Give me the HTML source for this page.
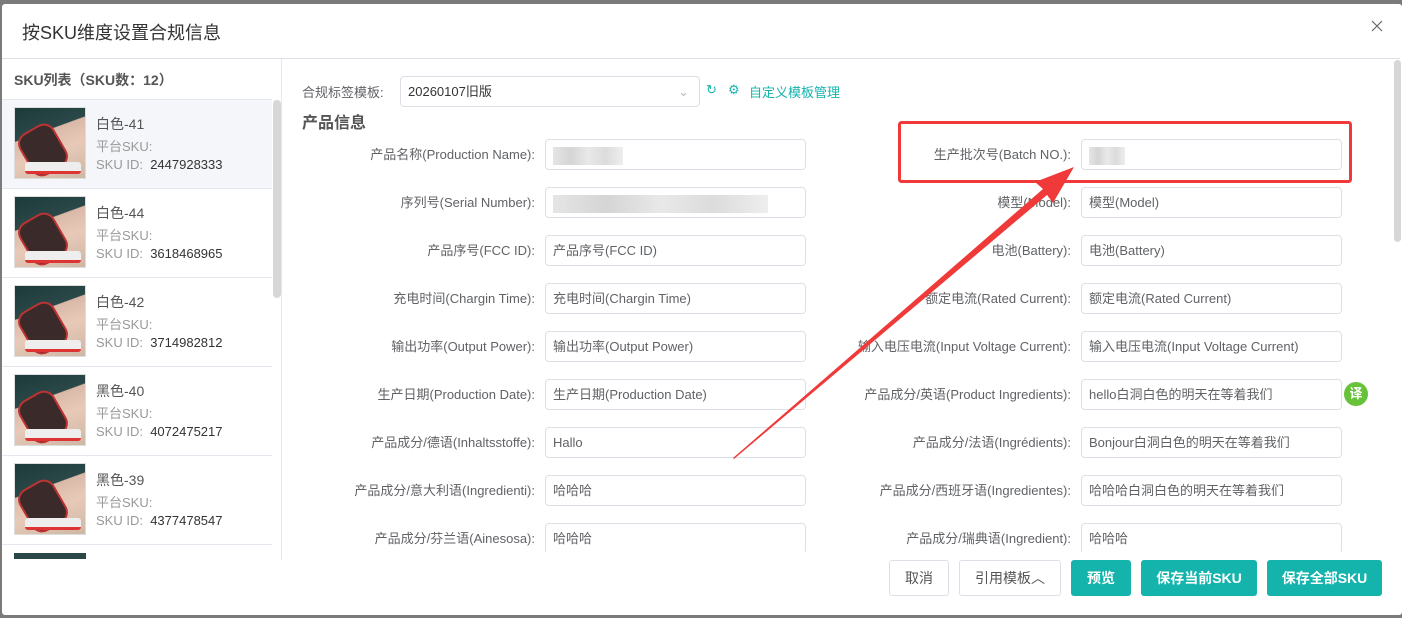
<!DOCTYPE html>
<html><head><meta charset="utf-8">
<style>
*{box-sizing:border-box;margin:0;padding:0}
body{width:1402px;height:618px;background:#7b7b7b;position:relative;overflow:hidden;font-family:"Liberation Sans","Noto Sans CJK SC",sans-serif;font-size:13px;color:#606266}
.a{position:absolute}
.modal{left:2px;top:4px;width:1400px;height:611px;background:#fff;border-radius:3px}
.inp{position:absolute;height:31px;border:1px solid #dcdfe6;border-radius:4px;background:#fff;padding-left:7px;line-height:29px;color:#606266;font-size:13px;white-space:nowrap;overflow:hidden}
.lbl{position:absolute;text-align:right;line-height:31px;white-space:nowrap;font-size:13px;color:#606266}
.item{position:absolute;left:2px;width:270px;height:89px;border-bottom:1px solid #e4e7ed}
.item .img{position:absolute;left:12px;top:7px;width:72px;height:72px;border:1px solid #ddd;background:linear-gradient(160deg,#1d3a3a 0%,#2b4848 35%,#d9b8a8 36%,#e8c9b8 60%,#cdb8a5 100%);overflow:hidden}
.item .img:before{content:"";position:absolute;left:8px;top:18px;width:36px;height:44px;background:#3a2a2a;border-radius:12px;transform:rotate(-30deg);border:2px solid #b33}
.item .img:after{content:"";position:absolute;left:10px;top:54px;width:56px;height:9px;background:#eee;border-bottom:3px solid #d33;border-radius:3px}
.item .t{position:absolute;left:94px;top:14px;font-size:14px;color:#555}
.item .s{position:absolute;left:94px;top:38px;color:#999;font-size:13px;line-height:18px}
.item .s b{font-weight:normal;color:#333}
.btn{position:absolute;top:560px;height:36px;border-radius:3px;font-size:14px;text-align:center;line-height:34px}
.g{background:#14b4ad;color:#fff;font-weight:bold;border:1px solid #14b4ad}
.w{background:#fff;color:#555;border:1px solid #dcdfe6}
.blur{display:inline-block;height:18px;vertical-align:middle;background:linear-gradient(90deg,#e2e2e2,#d0d0d0,#e6e6e6,#d8d8d8,#ececec);opacity:.9}
</style></head><body>
<div class="a modal"></div>
<div class="a" style="left:22px;top:19px;font-size:18px;color:#333">按SKU维度设置合规信息</div>
<svg class="a" style="left:1371px;top:20px" width="12" height="12"><path d="M1 1L11 11M11 1L1 11" stroke="#666" stroke-width="1.2"/></svg>
<div class="a" style="left:2px;top:58px;width:1398px;height:1px;background:#dcdfe6"></div>
<div class="a" style="left:281px;top:59px;width:1px;height:501px;background:#e4e7ed"></div>
<div class="a" style="left:14px;top:70px;font-size:14px;font-weight:bold;color:#555">SKU列表（SKU数：12）</div>
<div class="a" style="left:2px;top:99px;width:270px;height:1px;background:#e4e7ed"></div>
<div class="item" style="top:100px;background:#f4f6fa"><div class="img"></div><div class="t">白色-41</div><div class="s">平台SKU:<br>SKU ID:&nbsp; <b>2447928333</b></div></div>
<div class="item" style="top:189px"><div class="img"></div><div class="t">白色-44</div><div class="s">平台SKU:<br>SKU ID:&nbsp; <b>3618468965</b></div></div>
<div class="item" style="top:278px"><div class="img"></div><div class="t">白色-42</div><div class="s">平台SKU:<br>SKU ID:&nbsp; <b>3714982812</b></div></div>
<div class="item" style="top:367px"><div class="img"></div><div class="t">黑色-40</div><div class="s">平台SKU:<br>SKU ID:&nbsp; <b>4072475217</b></div></div>
<div class="item" style="top:456px"><div class="img"></div><div class="t">黑色-39</div><div class="s">平台SKU:<br>SKU ID:&nbsp; <b>4377478547</b></div></div>
<div class="a" style="left:14px;top:553px;width:72px;height:6px;background:#2b4848;overflow:hidden"></div>
<div class="a" style="left:273px;top:100px;width:8px;height:198px;background:#d7d7d7;border-radius:4px"></div>
<div class="a" style="left:1394px;top:60px;width:7px;height:182px;background:#d7d7d7;border-radius:4px"></div>

<div class="a" style="left:302px;top:82px;color:#606266">合规标签模板:</div>
<div class="inp" style="left:400px;top:76px;width:300px;color:#333">20260107旧版<span style="position:absolute;right:10px;top:0;color:#bbb">⌄</span></div>
<div class="a" style="left:706px;top:82px;color:#14b4ad">↻</div>
<div class="a" style="left:728px;top:82px;color:#14b4ad">⚙</div>
<div class="a" style="left:749px;top:82px;color:#14b4ad">自定义模板管理</div>
<div class="a" style="left:302px;top:109px;font-size:16px;font-weight:bold;color:#555">产品信息</div>

<div class="lbl" style="right:867px;top:139px">产品名称(Production Name):</div>
<div class="inp" style="left:545px;top:139px;width:261px"><span class="blur" style="width:70px"></span></div>
<div class="lbl" style="right:867px;top:187px">序列号(Serial Number):</div>
<div class="inp" style="left:545px;top:187px;width:261px"><span class="blur" style="width:215px"></span></div>
<div class="lbl" style="right:867px;top:235px">产品序号(FCC ID):</div>
<div class="inp" style="left:545px;top:235px;width:261px">产品序号(FCC ID)</div>
<div class="lbl" style="right:867px;top:283px">充电时间(Chargin Time):</div>
<div class="inp" style="left:545px;top:283px;width:261px">充电时间(Chargin Time)</div>
<div class="lbl" style="right:867px;top:331px">输出功率(Output Power):</div>
<div class="inp" style="left:545px;top:331px;width:261px">输出功率(Output Power)</div>
<div class="lbl" style="right:867px;top:379px">生产日期(Production Date):</div>
<div class="inp" style="left:545px;top:379px;width:261px">生产日期(Production Date)</div>
<div class="lbl" style="right:867px;top:427px">产品成分/德语(Inhaltsstoffe):</div>
<div class="inp" style="left:545px;top:427px;width:261px">Hallo</div>
<div class="lbl" style="right:867px;top:475px">产品成分/意大利语(Ingredienti):</div>
<div class="inp" style="left:545px;top:475px;width:261px">哈哈哈</div>
<div class="lbl" style="right:867px;top:523px">产品成分/芬兰语(Ainesosa):</div>
<div class="inp" style="left:545px;top:523px;width:261px">哈哈哈</div>

<div class="lbl" style="right:331px;top:139px">生产批次号(Batch NO.):</div>
<div class="inp" style="left:1081px;top:139px;width:261px"><span class="blur" style="width:36px"></span></div>
<div class="lbl" style="right:331px;top:187px">模型(Model):</div>
<div class="inp" style="left:1081px;top:187px;width:261px">模型(Model)</div>
<div class="lbl" style="right:331px;top:235px">电池(Battery):</div>
<div class="inp" style="left:1081px;top:235px;width:261px">电池(Battery)</div>
<div class="lbl" style="right:331px;top:283px">额定电流(Rated Current):</div>
<div class="inp" style="left:1081px;top:283px;width:261px">额定电流(Rated Current)</div>
<div class="lbl" style="right:331px;top:331px">输入电压电流(Input Voltage Current):</div>
<div class="inp" style="left:1081px;top:331px;width:261px">输入电压电流(Input Voltage Current)</div>
<div class="lbl" style="right:331px;top:379px">产品成分/英语(Product Ingredients):</div>
<div class="inp" style="left:1081px;top:379px;width:261px">hello白洞白色的明天在等着我们</div>
<div class="a" style="left:1344px;top:382px;width:24px;height:24px;border-radius:50%;background:#67c23a;color:#fff;font-size:13px;font-weight:bold;text-align:center;line-height:24px">译</div>
<div class="lbl" style="right:331px;top:427px">产品成分/法语(Ingrédients):</div>
<div class="inp" style="left:1081px;top:427px;width:261px">Bonjour白洞白色的明天在等着我们</div>
<div class="lbl" style="right:331px;top:475px">产品成分/西班牙语(Ingredientes):</div>
<div class="inp" style="left:1081px;top:475px;width:261px">哈哈哈白洞白色的明天在等着我们</div>
<div class="lbl" style="right:331px;top:523px">产品成分/瑞典语(Ingredient):</div>
<div class="inp" style="left:1081px;top:523px;width:261px">哈哈哈</div>

<div class="a" style="left:282px;top:552px;width:1110px;height:8px;background:#fff"></div>
<div class="btn w" style="left:889px;width:60px">取消</div>
<div class="btn w" style="left:959px;width:102px">引用模板︿</div>
<div class="btn g" style="left:1071px;width:60px">预览</div>
<div class="btn g" style="left:1141px;width:116px">保存当前SKU</div>
<div class="btn g" style="left:1267px;width:115px">保存全部SKU</div>

<svg class="a" style="left:0;top:0" width="1402" height="618">
<rect x="899.5" y="122.5" width="451" height="59" rx="2" fill="none" stroke="#f03a3a" stroke-width="3"/>
<polygon points="733,458 1043,189 1035,182 1074,167 1053,203 1047,195 734,459" fill="#f03a3a"/>
</svg>
</body></html>
